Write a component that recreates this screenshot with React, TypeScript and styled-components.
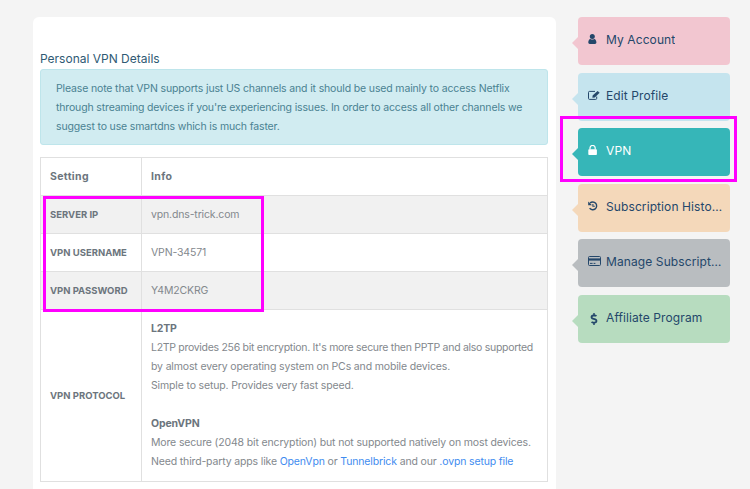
import React from "react";
import styled, { createGlobalStyle } from "styled-components";
import { FaDollarSign } from "react-icons/fa";

// account page: VPN details card on the left, coloured menu on the right

const GlobalStyle = createGlobalStyle`
  html, body {
    margin: 0;
    height: 489px;
    overflow: hidden;
    background: #f4f4f4;
    font-family: Inter, "Liberation Sans", sans-serif;
  }
`;

const Page = styled.div`
  position: relative;
  display: flex;
  align-items: flex-start;
  gap: 22px;
  height: 489px;
  padding: 17px 20px 0 33px;
  box-sizing: border-box;
  overflow: hidden;
`;

const Card = styled.main`
  width: 523px;
  flex: none;
  height: 520px;
  box-sizing: border-box;
  padding: 33px 8px 0 7px;
  background: #ffffff;
  border-radius: 6px;
`;

const Title = styled.h3`
  margin: 0 0 2px;
  font-size: 12px;
  line-height: 17px;
  font-weight: 400;
  color: #2f5a74;
`;

const Notice = styled.div`
  box-sizing: border-box;
  height: 76px;
  padding: 9px 15px;
  margin-bottom: 12px;
  background: #d1ecf1;
  border: 1px solid #bee5eb;
  border-radius: 3px;
  font-size: 10.5px;
  letter-spacing: -0.15px;
  line-height: 19px;
  white-space: nowrap;
  color: #4a8291;
`;

const Table = styled.table`
  width: 508px;
  border-collapse: collapse;
  table-layout: fixed;
  font-size: 10.5px;
  letter-spacing: -0.15px;
  color: #83888d;
  border: 1px solid #e0e0e0;
`;

const LabelCol = styled.col`
  width: 101px;
`;

const Row = styled.tr<{ $shade?: boolean }>`
  height: 38px;
  background: ${(props) => (props.$shade ? "#f1f1f1" : "#ffffff")};
`;

const Head = styled.th`
  box-sizing: border-box;
  padding: 0 9px;
  text-align: left;
  font-size: 10.5px;
  letter-spacing: 0.35px;
  font-weight: 700;
  color: #6c757d;
  border: 1px solid #e0e0e0;
`;

const Label = styled(Head)`
  font-size: 9.5px;
  letter-spacing: 0;
`;

const Cell = styled.td`
  padding: 0 9px;
  border: 1px solid #e0e0e0;
`;

const ProtocolCell = styled(Cell)`
  padding: 9px 9px 10px;
  line-height: 19px;
  white-space: nowrap;
`;

const TightLine = styled.span`
  letter-spacing: -0.29px;
`;

const Strong = styled.div`
  font-weight: 700;
  color: #6c757d;
`;

const Spacer = styled.div`
  height: 19px;
`;

const Link = styled.a`
  color: #3f8cf0;
  text-decoration: none;
`;

const Menu = styled.nav`
  width: 152px;
  flex: none;
  display: flex;
  flex-direction: column;
  gap: 7.6px;
`;

const Item = styled.a<{ $bg: string; $light?: boolean }>`
  position: relative;
  display: flex;
  align-items: flex-start;
  height: 48px;
  box-sizing: border-box;
  padding: 15px 7.5px 0 10px;
  background: ${(props) => props.$bg};
  border-radius: 4px;
  font-size: 12px;
  letter-spacing: 0.1px;
  line-height: 16px;
  color: ${(props) => (props.$light ? "#ffffff" : "#24476a")};

  &::before {
    content: "";
    position: absolute;
    left: -6px;
    top: 20px;
    border-style: solid;
    border-width: 6px 6px 6px 0;
    border-color: transparent ${(props) => props.$bg} transparent transparent;
  }
`;

const IconBox = styled.span`
  width: 18px;
  flex: none;
  display: flex;
  align-items: flex-start;
  height: 14px;
  padding-top: 2px;
`;

const DollarIcon = styled(FaDollarSign)`
  margin-top: 1px;
  font-size: 12px;
`;

const ItemText = styled.span`
  white-space: nowrap;
  overflow: hidden;
  text-overflow: ellipsis;
`;

const Highlight = styled.div<{ $x: number; $y: number; $w: number; $h: number }>`
  position: absolute;
  left: ${(props) => props.$x}px;
  top: ${(props) => props.$y}px;
  width: ${(props) => props.$w}px;
  height: ${(props) => props.$h}px;
  box-sizing: border-box;
  border: 3px solid #ff00ff;
  pointer-events: none;
`;

const Glyph: React.FC<{ children: React.ReactNode }> = ({ children }) => (
  <svg width="14" height="12" viewBox="0 0 14 12" fill="currentColor" stroke="none">
    {children}
  </svg>
);

const UserIcon = () => (
  <Glyph>
    <circle cx="4.3" cy="2.5" r="2.5" />
    <path d="M.3 8.6C.3 6.6 1 5 2.4 4.9 3 5.4 3.6 5.6 4.3 5.6 5 5.6 5.6 5.4 6.2 4.9 7.6 5 8.4 6.6 8.4 8.6 8.4 9.5 7.8 10 7 10L1.7 10C.9 10 .3 9.5 .3 8.6Z" />
  </Glyph>
);

const EditIcon = () => (
  <Glyph>
    <path
      d="M8.7 6.6V8.4a1 1 0 0 1-1 1H1.5a1 1 0 0 1-1-1V2.4a1 1 0 0 1 1-1H7"
      fill="none"
      stroke="currentColor"
      strokeWidth="1"
    />
    <path d="M4.6 5.4 9.6.9 11.6 2.8 6.8 7.5 4.4 7.8Z" />
  </Glyph>
);

const LockIcon = () => (
  <Glyph>
    <rect x=".3" y="4.3" width="8.6" height="5.7" rx=".8" />
    <path d="M2 4.6V3a2.6 2.6 0 0 1 5.2 0V4.6" fill="none" stroke="currentColor" strokeWidth="1.2" />
  </Glyph>
);

const HistoryIcon = () => (
  <Glyph>
    <path d="M2 2.1A3.9 3.9 0 1 1 1.6 7.2" fill="none" stroke="currentColor" strokeWidth="1.4" />
    <path d="M.2.4V4.2H4Z" />
    <path d="M4.9 2.9V5.2H6.8" fill="none" stroke="currentColor" strokeWidth="1.1" />
  </Glyph>
);

const CardIcon = () => (
  <Glyph>
    <rect x=".5" y=".5" width="12" height="9" rx="1" fill="none" stroke="currentColor" strokeWidth="1" />
    <rect x="1" y="2.4" width="11" height="2.2" />
    <path d="M2 7.4h2.6M5.6 7.4h1.8" fill="none" stroke="currentColor" strokeWidth="1" />
  </Glyph>
);

const menu = [
  { label: "My Account", bg: "#f2c6d0", icon: <UserIcon /> },
  { label: "Edit Profile", bg: "#c5e4ee", icon: <EditIcon /> },
  { label: "VPN", bg: "#36b6b8", icon: <LockIcon />, light: true },
  { label: "Subscription History", bg: "#f4d8ba", icon: <HistoryIcon /> },
  { label: "Manage Subscription", bg: "#b9bdc0", icon: <CardIcon /> },
  { label: "Affiliate Program", bg: "#b7dcbf", icon: <DollarIcon /> },
];

export default function App() {
  return (
    <Page>
      <GlobalStyle />
      <Card>
        <Title>Personal VPN Details</Title>
        <Notice>
          Please note that VPN supports just US channels and it should be used mainly to access Netflix
          <br />
          through streaming devices if you're experiencing issues. In order to access all other channels we
          <br />
          suggest to use smartdns which is much faster.
        </Notice>
        <Table>
          <colgroup>
            <LabelCol />
            <col />
          </colgroup>
          <tbody>
            <Row>
              <Head>Setting</Head>
              <Head>Info</Head>
            </Row>
            <Row $shade>
              <Label>SERVER IP</Label>
              <Cell>vpn.dns-trick.com</Cell>
            </Row>
            <Row>
              <Label>VPN USERNAME</Label>
              <Cell>VPN-34571</Cell>
            </Row>
            <Row $shade>
              <Label>VPN PASSWORD</Label>
              <Cell>Y4M2CKRG</Cell>
            </Row>
            <Row>
              <Label>VPN PROTOCOL</Label>
              <ProtocolCell>
                <Strong>L2TP</Strong>
                <TightLine>L2TP provides 256 bit encryption. It's more secure then PPTP and also supported</TightLine>
                <br />
                by almost every operating system on PCs and mobile devices.
                <br />
                Simple to setup. Provides very fast speed.
                <Spacer />
                <Strong>OpenVPN</Strong>
                More secure (2048 bit encryption) but not supported natively on most devices.
                <br />
                Need third-party apps like <Link href="#">OpenVpn</Link> or <Link href="#">Tunnelbrick</Link> and our{" "}
                <Link href="#">.ovpn setup file</Link>
              </ProtocolCell>
            </Row>
          </tbody>
        </Table>
      </Card>
      <Menu>
        {menu.map((item) => (
          <Item key={item.label} $bg={item.bg} $light={item.light}>
            <IconBox>{item.icon}</IconBox>
            <ItemText>{item.label}</ItemText>
          </Item>
        ))}
      </Menu>
      <Highlight $x={43} $y={196} $w={221} $h={116} />
      <Highlight $x={560} $y={116} $w={177} $h={66} />
    </Page>
  );
}
